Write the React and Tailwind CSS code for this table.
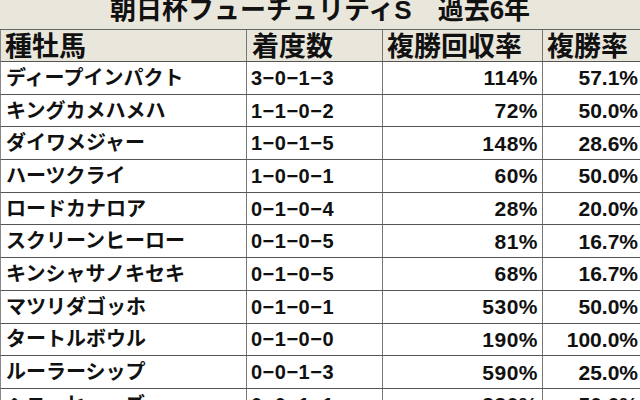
const rows = [
  { name: "ディープインパクト", rec: "3−0−1−3", roi: "114%", rate: "57.1%" },
  { name: "キングカメハメハ", rec: "1−1−0−2", roi: "72%", rate: "50.0%" },
  { name: "ダイワメジャー", rec: "1−0−1−5", roi: "148%", rate: "28.6%" },
  { name: "ハーツクライ", rec: "1−0−0−1", roi: "60%", rate: "50.0%" },
  { name: "ロードカナロア", rec: "0−1−0−4", roi: "28%", rate: "20.0%" },
  { name: "スクリーンヒーロー", rec: "0−1−0−5", roi: "81%", rate: "16.7%" },
  { name: "キンシャサノキセキ", rec: "0−1−0−5", roi: "68%", rate: "16.7%" },
  { name: "マツリダゴッホ", rec: "0−1−0−1", roi: "530%", rate: "50.0%" },
  { name: "タートルボウル", rec: "0−1−0−0", roi: "190%", rate: "100.0%" },
  { name: "ルーラーシップ", rec: "0−0−1−3", roi: "590%", rate: "25.0%" },
  { name: "ヘニーヒューズ", rec: "0−0−1−1", roi: "330%", rate: "50.0%" },
];

const font = { fontFamily: '"Liberation Sans", "Noto Sans CJK JP", sans-serif' };

const App = () => {
  return (
    <div className="w-[640px] h-[400px] overflow-hidden bg-white text-[#111]" style={font}>
      <div className="h-[30px] bg-[#e9e6dc] border-b border-[#666] flex justify-center">
        <div className="-mt-[3px] text-[26px] leading-none font-semibold">
          朝日杯フューチュリティS　過去6年
        </div>
      </div>
      <div className="grid grid-cols-[246px_136px_160px_98px] h-[32px] bg-[#e9e6dc] border-b border-[#555] border-l border-l-[#888] text-[27px] font-bold leading-none">
        <div className="flex items-center pl-[4px] pt-[3px] border-r border-[#777]">種牡馬</div>
        <div className="flex items-center pl-[5px] pt-[3px] border-r border-[#777]">着度数</div>
        <div className="flex items-center pl-[4px] pt-[3px] border-r border-[#777]">複勝回収率</div>
        <div className="flex items-center pl-[4px] pt-[3px]">複勝率</div>
      </div>
      {rows.map((r, i) => (
        <div
          key={i}
          className="grid grid-cols-[246px_136px_160px_98px] h-[32.7px] border-b border-[#555] border-l border-l-[#888] text-[20px] leading-none"
        >
          <div className="flex items-center pl-[5px] border-r border-[#777] font-bold">{r.name}</div>
          <div className="flex items-center pl-[4px] border-r border-[#777] text-[20px] font-bold tracking-[0.5px]">{r.rec}</div>
          <div className="flex items-center justify-end pr-[4px] border-r border-[#777] text-[21px] font-bold tracking-[0.5px]">{r.roi}</div>
          <div className="flex items-center justify-end pr-[3px] text-[21px] font-bold">{r.rate}</div>
        </div>
      ))}
    </div>
  );
};

export default App;
